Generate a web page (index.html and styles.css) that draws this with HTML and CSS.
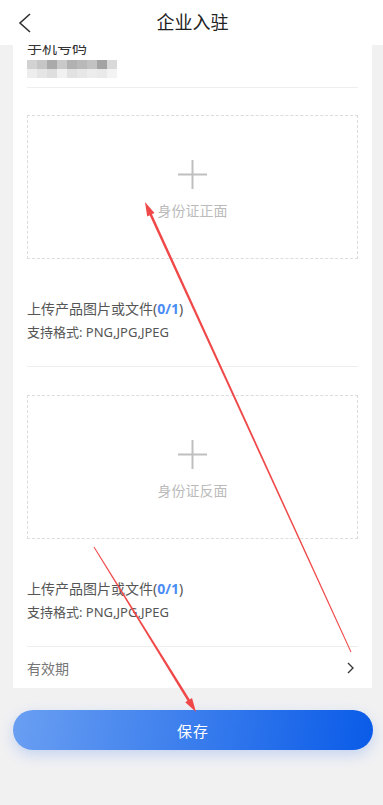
FILE: index.html
```html
<!DOCTYPE html>
<html lang="zh-CN">
<head>
    <meta charset="UTF-8">
    <meta name="viewport" content="width=device-width, initial-scale=1.0">
    <title>企业入驻</title>
    <link rel="stylesheet" href="styles.css">
</head>
<body>
    <!-- 顶部导航 -->
    <header class="nav">
        <a href="#" class="nav-back">
            <svg width="14" height="20" viewBox="0 0 14 20">
                <polyline points="12,1 2,10 12,19" fill="none" stroke="#333" stroke-width="1.6" stroke-linejoin="miter"/>
            </svg>
        </a>
        <h1 class="nav-title">企业入驻</h1>
        <span></span>
    </header>

    <main class="page">
        <div class="card">
            <!-- 手机号码 -->
            <div class="field">
                <p class="field-label">手机号码</p>
                <div class="blur-num"></div>
            </div>

            <!-- 身份证正面 -->
            <div class="upload">
                <div class="upload-box">
                    <svg class="plus" width="29" height="29" viewBox="0 0 29 29">
                        <path d="M14.5 0v29M0 14.5h29" stroke="#bfbfbf" stroke-width="2"/>
                    </svg>
                    <span class="upload-name">身份证正面</span>
                </div>
                <p class="upload-tip">上传产品图片或文件(<b>0/1</b>)</p>
                <p class="upload-format">支持格式: PNG,JPG,JPEG</p>
            </div>

            <!-- 身份证反面 -->
            <div class="upload">
                <div class="upload-box">
                    <svg class="plus" width="29" height="29" viewBox="0 0 29 29">
                        <path d="M14.5 0v29M0 14.5h29" stroke="#bfbfbf" stroke-width="2"/>
                    </svg>
                    <span class="upload-name">身份证反面</span>
                </div>
                <p class="upload-tip">上传产品图片或文件(<b>0/1</b>)</p>
                <p class="upload-format">支持格式: PNG,JPG,JPEG</p>
            </div>

            <!-- 有效期 -->
            <div class="row">
                <span class="row-label">有效期</span>
                <svg width="7" height="12" viewBox="0 0 7 12" class="row-arrow">
                    <polyline points="1,1 6,6 1,11" fill="none" stroke="#333" stroke-width="1.3"/>
                </svg>
            </div>
        </div>

        <button class="btn-save">保存</button>
    </main>

    <!-- 标注箭头 -->
    <svg class="marks" width="383" height="805" viewBox="0 0 383 805">
        <polygon points="351.45,651.79 149.51,208.73 147.15,209.81 350.55,652.21" fill="#f04848"/>
        <polygon points="145,202 154.47,213.06 147.19,216.40" fill="#f04848"/>
        <polygon points="94.43,546.74 192.90,704.52 190.68,705.88 93.57,547.26" fill="#f04848"/>
        <polygon points="196,712 192.04,697.99 185.24,702.19" fill="#f04848"/>
    </svg>
</body>
</html>
```

FILE: styles.css
```css
/* 基础重置 */
* {
    margin: 0;
    padding: 0;
    box-sizing: border-box;
}

body {
    font-family: "Noto Sans", "Noto Sans CJK SC", sans-serif;
    background: #f1f1f2;
    color: #333;
    min-height: 805px;
    position: relative;
    overflow: hidden;
}

/* 顶部导航 */
.nav {
    position: fixed;
    top: 0;
    left: 0;
    right: 0;
    height: 45px;
    background: #fff;
    display: grid;
    grid-template-columns: 50px 1fr 50px;
    align-items: center;
    z-index: 10;
}

.nav-back {
    display: flex;
    padding-left: 18px;
}

.nav-title {
    text-align: center;
    font-size: 18px;
    font-weight: normal;
    color: #222;
    line-height: 45px;
    padding-left: 2px;
}

/* 页面主体 */
.page {
    padding: 0 11px 0 13px;
}

.card {
    background: #fff;
    padding: 37px 14px 0;
}

.field {
    padding-bottom: 9px;
    border-bottom: 1px solid #eee;
}

.field-label {
    font-size: 15px;
    line-height: 20px;
    color: #333;
}

/* 打码的手机号 */
.blur-num {
    margin-top: 3px;
    width: 90px;
    height: 18px;
    background:
        linear-gradient(90deg, #d2d2d2 0 10px, #c6c6c6 10px 20px, #aaa 20px 30px, #c9c9c9 30px 40px, #b1b1b1 40px 50px, #b9b9b9 50px 60px, #c2c2c2 60px 70px, #a3a3a3 70px 80px, #d9d9d9 80px 90px) top / 100% 9px no-repeat,
        linear-gradient(90deg, #ededed 0 10px, #e5e5e5 10px 20px, #dedede 20px 30px, #f1f1f1 30px 40px, #e2e2e2 40px 50px, #e7e7e7 50px 60px, #ececec 60px 70px, #e9e9e9 70px 80px, #f3f3f3 80px 90px) bottom / 100% 9px no-repeat;
}

/* 上传区域 */
.upload {
    padding: 27px 0 25px;
    border-bottom: 1px solid #eee;
}

.upload + .upload {
    padding-top: 28px;
}

.upload-box {
    height: 144px;
    border: 1px dashed #dcdcdc;
    display: flex;
    flex-direction: column;
    align-items: center;
    padding-top: 44px;
}

.plus {
    display: block;
}

.upload-name {
    margin-top: 12px;
    font-size: 14px;
    line-height: 20px;
    color: #bbb;
}

.upload-tip {
    margin-top: 40px;
    font-size: 14px;
    line-height: 20px;
    color: #555;
}

.upload-tip b {
    color: #4a8cf3;
    font-weight: bold;
}

.upload-format {
    margin-top: 4px;
    font-size: 13px;
    line-height: 18px;
    color: #555;
}

/* 有效期 */
.row {
    height: 41px;
    display: flex;
    align-items: center;
    justify-content: space-between;
}

.row-label {
    font-size: 14px;
    color: #777;
}

.row-arrow {
    margin-right: 4px;
}

/* 保存按钮 */
.btn-save {
    display: block;
    width: 360px;
    height: 40px;
    margin-top: 22px;
    border: none;
    border-radius: 20px;
    background: linear-gradient(100deg, #6a9ff2 0%, #3a7ded 50%, #0a5be8 100%);
    color: #fff;
    font-family: inherit;
    font-size: 15px;
    letter-spacing: 1px;
    box-shadow: 0 5px 14px rgba(40, 110, 240, 0.22);
}

/* 标注 */
.marks {
    position: absolute;
    top: 0;
    left: 0;
    pointer-events: none;
    z-index: 20;
}
```
